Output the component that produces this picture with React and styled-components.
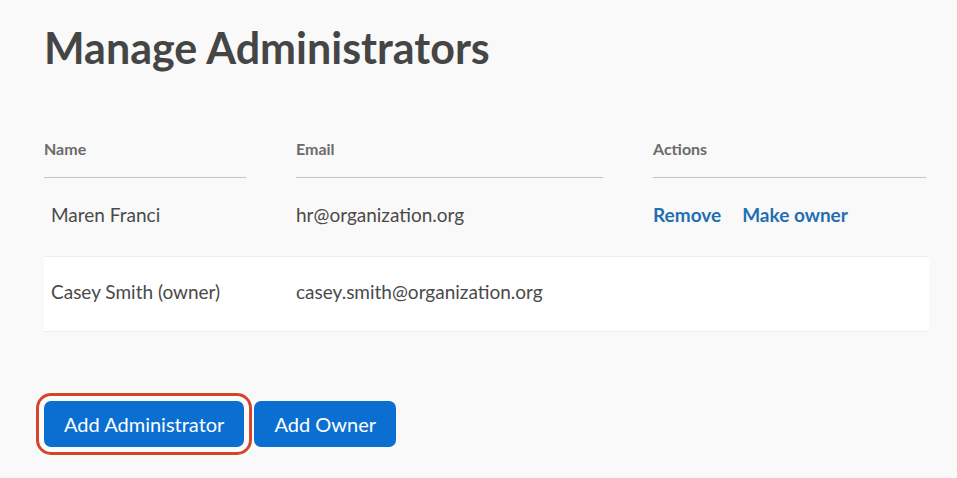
import React from 'react';
import styled, { createGlobalStyle } from 'styled-components';

const GlobalStyle = createGlobalStyle`
  body {
    margin: 0;
    background: #f9f9f9;
    font-family: Lato, "Noto Sans", sans-serif;
    color: #444;
  }
`;

const Page = styled.div`
  box-sizing: border-box;
  min-height: 100vh;
  padding: 22px 0 30px 44px;
  width: 957px;
`;

const Title = styled.h1`
  margin: 0;
  font-size: 43px;
  font-weight: 700;
  color: #454545;
  line-height: 52px;
`;

const Table = styled.div`
  margin-top: 58px;
  width: 885px;
  display: flex;
  flex-direction: column;
`;

const Row = styled.div`
  display: grid;
  grid-template-columns: 202px 307px 273px;
  column-gap: 50px;
  align-items: center;
  height: ${({ header, striped }) => (header ? 'auto' : striped ? '76px' : '78px')};
  padding-bottom: ${({ header }) => (header ? 0 : 5)}px;
  box-sizing: border-box;
  background: ${({ striped }) => (striped ? '#fff' : 'transparent')};
  border-top: ${({ striped }) => (striped ? '1px solid #ececec' : 'none')};
  border-bottom: ${({ striped }) => (striped ? '1px solid #ececec' : 'none')};
`;

const HeadCell = styled.div`
  font-size: 16px;
  font-weight: 700;
  color: #6b6b6b;
  padding: 7px 0 19px;
  border-bottom: 1px solid #c4c4c4;
`;

const Cell = styled.div`
  font-size: 19px;
  color: #4a4a4a;
  padding-left: ${({ indent }) => indent || 0}px;
  display: flex;
  gap: 21px;
`;

const Action = styled.a`
  color: #1f6fb2;
  font-weight: 700;
  font-size: 19px;
  cursor: pointer;
`;

const Buttons = styled.div`
  margin-top: 69px;
  display: flex;
  gap: 10px;
`;

const Button = styled.button`
  font-family: inherit;
  font-size: 20px;
  color: #fff;
  background: #0b6fd2;
  border: none;
  border-radius: 7px;
  height: 46px;
  padding: 0 20px;
  cursor: pointer;
  box-shadow: ${({ focused }) =>
    focused ? '0 0 0 5px #fbfbfb, 0 0 0 8px #d6452b' : 'none'};
`;

export default function App() {
  return (
    <>
      <GlobalStyle />
      <Page>
        <Title>Manage Administrators</Title>
        <Table>
          <Row header>
            <HeadCell>Name</HeadCell>
            <HeadCell>Email</HeadCell>
            <HeadCell>Actions</HeadCell>
          </Row>
          <Row>
            <Cell indent={7}>Maren Franci</Cell>
            <Cell>hr@organization.org</Cell>
            <Cell>
              <Action>Remove</Action>
              <Action>Make owner</Action>
            </Cell>
          </Row>
          <Row striped>
            <Cell indent={7}>Casey Smith (owner)</Cell>
            <Cell>casey.smith@organization.org</Cell>
            <Cell />
          </Row>
        </Table>
        <Buttons>
          <Button focused>Add Administrator</Button>
          <Button>Add Owner</Button>
        </Buttons>
      </Page>
    </>
  );
}
